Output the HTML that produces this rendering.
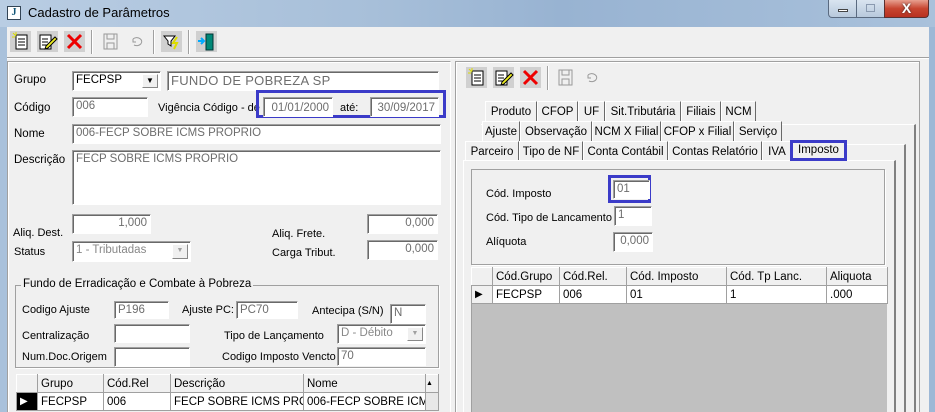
<!DOCTYPE html>
<html><head><meta charset="utf-8"><style>
*{box-sizing:border-box;margin:0;padding:0}
html{width:935px;height:412px;overflow:hidden}
body{width:935px;height:412px;overflow:hidden;background:#f0f0f0;font-family:"Liberation Sans",sans-serif;font-size:11px;color:#000;position:relative}
.a{position:absolute;white-space:nowrap}
.in{position:absolute;background:#fff;border:1px solid;border-color:#a0a0a0 #fff #fff #a0a0a0;box-shadow:inset 1px 1px 0 #696969;color:#6d6d6d;padding:1px 3px;line-height:15px;overflow:hidden;white-space:nowrap;font-size:11.5px}
.r{text-align:right}
.cb{position:absolute;right:2px;top:2px;width:16px;height:calc(100% - 4px);background:#f0f0f0;border:1px solid #fff;border-right-color:#888;border-bottom-color:#888;font-size:7px;text-align:center;line-height:12px;color:#a0a0a0}
.tab{position:absolute;height:20px;border:1px solid #fff;border-right:1px solid #696969;border-bottom:none;background:#f0f0f0;text-align:center;line-height:19px;padding-top:1px;overflow:hidden;white-space:nowrap;font-size:11.5px}
.blue{position:absolute;border:3px solid #3b3bc8}
.g{position:absolute;border:1px solid #a0a0a0;box-shadow:1px 1px 0 #fff}
table{border-collapse:collapse;position:absolute;font-size:11.5px}
td{border:1px solid #a0a0a0;height:18px;padding:0 3px;white-space:nowrap;overflow:hidden}
.hd td{background:#f0f0f0;border-color:#fff #a0a0a0 #a0a0a0 #fff}
.ico{position:absolute;width:21px;height:21px}
.ico.b{background:#d0d0d0}
</style></head><body>
<div class="a" style="left:0;top:0;width:935px;height:27px;background:linear-gradient(90deg,#b9cde3,#a7bfd9 40%,#98b3d2 60%,#a9c1db)"></div>
<div class="a" style="left:0;top:27px;width:7px;height:385px;background:#a9c1db"></div>
<div class="a" style="left:929px;top:27px;width:6px;height:385px;background:#9db8d6"></div>
<div class="a" style="left:7px;top:6px;width:14px;height:14px;background:#fff;border:1px solid #345;font:bold 10px 'Liberation Serif';color:#157;text-align:center;line-height:12px">J</div>
<div class="a" style="left:28px;top:5px;font-size:13px">Cadastro de Parâmetros</div>
<div class="a" style="left:828px;top:0;width:29px;height:18px;border:1px solid #5a6a80;border-top:none;border-radius:0 0 0 4px;background:linear-gradient(#d9e4f0,#b8c9dc)"><div class="a" style="left:9px;top:9px;width:10px;height:3px;background:#fff;border:1px solid #444"></div></div>
<div class="a" style="left:857px;top:0;width:27px;height:18px;border-bottom:1px solid #5a6a80;background:linear-gradient(#d9e4f0,#b8c9dc)"><div class="a" style="left:9px;top:4px;width:9px;height:8px;border:1px solid #8a9ab0"></div></div>
<div class="a" style="left:884px;top:0;width:45px;height:18px;border:1px solid #5a3030;border-top:none;border-radius:0 0 4px 0;background:linear-gradient(#e8a090,#c74530 50%,#b83020);color:#fff;font:bold 14px 'Liberation Sans';text-align:center;line-height:17px;text-shadow:0 0 2px #333">X</div>
<div class="ico b" style="left:10px;top:31px"><svg width="21" height="21"><rect x="6" y="4" width="11" height="14" fill="#fff" stroke="#000"/><path d="M8 8h7M8 11h7M8 14h7" stroke="#000"/><path d="M3 2l3 3M6 1v3M2 6h3" stroke="#dd0"/></svg></div>
<div class="ico b" style="left:37px;top:31px"><svg width="21" height="21"><rect x="3" y="4" width="11" height="14" fill="#fff" stroke="#000"/><path d="M5 8h6M5 11h6M5 14h6" stroke="#000"/><path d="M9 15l9-9 2 2-9 9-3 1z" fill="#ee2" stroke="#000"/></svg></div>
<div class="ico b" style="left:64px;top:31px"><svg width="21" height="21"><path d="M4 4l13 13M17 4L4 17" stroke="#e00" stroke-width="3"/></svg></div>
<div class="a" style="left:91px;top:30px;width:1px;height:24px;background:#a0a0a0;box-shadow:1px 0 #fff"></div>
<div class="ico" style="left:100px;top:31px"><svg width="21" height="21"><rect x="4" y="3" width="13" height="15" fill="none" stroke="#999"/><rect x="7" y="3" width="7" height="5" fill="none" stroke="#999"/><rect x="7" y="12" width="7" height="6" fill="none" stroke="#999"/></svg></div>
<div class="ico" style="left:127px;top:31px"><svg width="21" height="21"><path d="M6 8a5 4 0 1 1 1 6M6 8v3h3" fill="none" stroke="#999"/></svg></div>
<div class="a" style="left:153px;top:30px;width:1px;height:24px;background:#a0a0a0;box-shadow:1px 0 #fff"></div>
<div class="ico b" style="left:161px;top:31px"><svg width="21" height="21"><path d="M3 5h11l-4 5v5l-3-2v-3z" fill="#fff" stroke="#000"/><path d="M16 6l-4 6h4l-3 6" fill="none" stroke="#dd0" stroke-width="2"/></svg></div>
<div class="a" style="left:188px;top:30px;width:1px;height:24px;background:#a0a0a0;box-shadow:1px 0 #fff"></div>
<div class="ico b" style="left:196px;top:31px"><svg width="21" height="21"><rect x="10" y="3" width="7" height="16" fill="#087" stroke="#033"/><path d="M2 10h6M5 7l3 3-3 3" stroke="#0af" stroke-width="2" fill="none"/></svg></div>
<div class="a" style="left:7px;top:57px;width:922px;height:1px;background:#a0a0a0;box-shadow:0 1px #fff"></div>

<div class="a" style="left:7px;top:61px;width:444px;height:351px;border:1px solid #a0a0a0;border-right-color:#fff;border-bottom:none;box-shadow:inset 1px 1px #fff"></div>
<div class="a" style="left:14px;top:74px;font-size:11.5px">Grupo</div>
<div class="in" style="left:72px;top:71px;width:89px;height:20px;color:#000">FECPSP<div class="cb" style="color:#000;font-size:8px">▼</div></div>
<div class="in" style="left:167px;top:71px;width:272px;height:20px;font-size:13px;letter-spacing:.3px">FUNDO DE POBREZA SP</div>
<div class="a" style="left:14px;top:102px;font-size:11.5px">Código</div>
<div class="in" style="left:72px;top:97px;width:76px;height:20px">006</div>
<div class="a" style="left:158px;top:102px">Vigência Código - de</div>
<div class="blue" style="left:256px;top:90px;width:190px;height:28px"></div>
<div class="in r" style="left:263px;top:97px;width:70px;height:20px;padding-top:3px">01/01/2000</div>
<div class="a" style="left:340px;top:102px">até:</div>
<div class="in r" style="left:370px;top:97px;width:69px;height:20px;padding-top:3px">30/09/2017</div>
<div class="a" style="left:14px;top:128px;font-size:11.5px">Nome</div>
<div class="in" style="left:72px;top:124px;width:369px;height:20px">006-FECP SOBRE ICMS PROPRIO</div>
<div class="a" style="left:14px;top:154px;font-size:11.5px">Descrição</div>
<div class="in" style="left:72px;top:150px;width:369px;height:55px">FECP SOBRE ICMS PROPRIO</div>
<div class="in r" style="left:72px;top:214px;width:79px;height:20px">1,000</div>
<div class="a" style="left:13px;top:227px">Aliq. Dest.</div>
<div class="in r" style="left:367px;top:214px;width:71px;height:20px">0,000</div>
<div class="a" style="left:272px;top:228px">Aliq. Frete.</div>
<div class="a" style="left:14px;top:246px">Status</div>
<div class="in" style="left:72px;top:241px;width:119px;height:21px;color:#888">1 - Tributadas<div class="cb">▼</div></div>
<div class="a" style="left:272px;top:247px">Carga Tribut.</div>
<div class="in r" style="left:367px;top:240px;width:71px;height:20px">0,000</div>
<div class="g" style="left:15px;top:285px;width:424px;height:83px"></div>
<div class="a" style="left:21px;top:278px;background:#f0f0f0;padding:0 2px;font-size:11.5px">Fundo de Erradicação e Combate à Pobreza</div>
<div class="a" style="left:22px;top:304px">Codigo Ajuste</div>
<div class="in" style="left:114px;top:301px;width:55px;height:18px">P196</div>
<div class="a" style="left:182px;top:304px">Ajuste PC:</div>
<div class="in" style="left:236px;top:301px;width:62px;height:18px">PC70</div>
<div class="a" style="left:312px;top:305px">Antecipa (S/N)</div>
<div class="in" style="left:390px;top:304px;width:36px;height:20px">N</div>
<div class="a" style="left:22px;top:330px">Centralização</div>
<div class="in" style="left:114px;top:324px;width:76px;height:19px"></div>
<div class="a" style="left:224px;top:330px">Tipo de Lançamento</div>
<div class="in" style="left:337px;top:324px;width:89px;height:20px;color:#888">D - Débito<div class="cb">▼</div></div>
<div class="a" style="left:22px;top:351px">Num.Doc.Origem</div>
<div class="in" style="left:114px;top:347px;width:76px;height:20px"></div>
<div class="a" style="left:222px;top:351px">Codigo Imposto Vencto</div>
<div class="in" style="left:337px;top:347px;width:89px;height:19px">70</div>
<table style="left:16px;top:374px;width:422px;table-layout:fixed">
<colgroup><col style="width:21px"><col style="width:66px"><col style="width:67px"><col style="width:133px"><col style="width:122px"><col style="width:13px"></colgroup>
<tr class="hd"><td></td><td>Grupo</td><td>Cód.Rel</td><td>Descrição</td><td>Nome</td><td style="font-size:7px;padding:0">▲</td></tr>
<tr style="background:#fff"><td style="background:#000;color:#fff;font-size:10px">▶</td><td>FECPSP</td><td>006</td><td>FECP SOBRE ICMS PROPR</td><td>006-FECP SOBRE ICMS I</td><td style="background:#e8e8e8"></td></tr>
</table>

<div class="a" style="left:455px;top:61px;width:465px;height:351px;border:1px solid #a0a0a0;border-bottom:none;box-shadow:inset 1px 1px #fff"></div>
<div class="ico b" style="left:466px;top:67px"><svg width="21" height="21"><rect x="6" y="4" width="11" height="14" fill="#fff" stroke="#000"/><path d="M8 8h7M8 11h7M8 14h7" stroke="#000"/><path d="M3 2l3 3M6 1v3M2 6h3" stroke="#dd0"/></svg></div>
<div class="ico b" style="left:493px;top:67px"><svg width="21" height="21"><rect x="3" y="4" width="11" height="14" fill="#fff" stroke="#000"/><path d="M5 8h6M5 11h6M5 14h6" stroke="#000"/><path d="M9 15l9-9 2 2-9 9-3 1z" fill="#ee2" stroke="#000"/></svg></div>
<div class="ico b" style="left:520px;top:67px"><svg width="21" height="21"><path d="M4 4l13 13M17 4L4 17" stroke="#e00" stroke-width="3"/></svg></div>
<div class="a" style="left:547px;top:66px;width:1px;height:24px;background:#a0a0a0;box-shadow:1px 0 #fff"></div>
<div class="ico" style="left:555px;top:67px"><svg width="21" height="21"><rect x="4" y="3" width="13" height="15" fill="none" stroke="#999"/><rect x="7" y="3" width="7" height="5" fill="none" stroke="#999"/><rect x="7" y="12" width="7" height="6" fill="none" stroke="#999"/></svg></div>
<div class="ico" style="left:582px;top:67px"><svg width="21" height="21"><path d="M6 8a5 4 0 1 1 1 6M6 8v3h3" fill="none" stroke="#999"/></svg></div>
<div class="a" style="left:481px;top:124px;width:435px;height:288px;border-top:1px solid #fff;border-right:2px solid #808080"></div>
<div class="a" style="left:470px;top:144px;width:436px;height:268px;border-top:1px solid #fff;border-right:2px solid #808080"></div>
<div class="a" style="left:463px;top:160px;width:433px;height:252px;border-top:1px solid #fff;border-left:1px solid #fff;border-right:2px solid #808080"></div>
<div class="tab" style="left:485px;top:101px;width:52px">Produto</div>
<div class="tab" style="left:537px;top:101px;width:41px">CFOP</div>
<div class="tab" style="left:578px;top:101px;width:27px">UF</div>
<div class="tab" style="left:605px;top:101px;width:76px">Sit.Tributária</div>
<div class="tab" style="left:681px;top:101px;width:40px">Filiais</div>
<div class="tab" style="left:721px;top:101px;width:35px">NCM</div>
<div class="tab" style="left:482px;top:121px;width:38px">Ajuste</div>
<div class="tab" style="left:520px;top:121px;width:72px">Observação</div>
<div class="tab" style="left:592px;top:121px;width:69px">NCM X Filial</div>
<div class="tab" style="left:661px;top:121px;width:73px">CFOP x Filial</div>
<div class="tab" style="left:734px;top:121px;width:48px">Serviço</div>
<div class="tab" style="left:465px;top:141px;width:54px;height:19px">Parceiro</div>
<div class="tab" style="left:519px;top:141px;width:64px;height:19px">Tipo de NF</div>
<div class="tab" style="left:583px;top:141px;width:85px;height:19px">Conta Contábil</div>
<div class="tab" style="left:668px;top:141px;width:94px;height:19px">Contas Relatório</div>
<div class="tab" style="left:762px;top:141px;width:30px;height:19px">IVA</div>
<div class="a" style="left:790px;top:140px;width:57px;height:21px;border:3px solid #3b3bc8;text-align:center;line-height:15px;background:#f0f0f0;font-size:11.5px">Imposto</div>
<div class="g" style="left:471px;top:169px;width:414px;height:96px"></div>
<div class="a" style="left:486px;top:188px">Cód. Imposto</div>
<div class="blue" style="left:608px;top:175px;width:43px;height:28px"></div>
<div class="in" style="left:613px;top:180px;width:37px;height:19px">01</div>
<div class="a" style="left:486px;top:212px">Cód. Tipo de Lancamento</div>
<div class="in" style="left:614px;top:206px;width:38px;height:20px">1</div>
<div class="a" style="left:486px;top:236px">Alíquota</div>
<div class="in r" style="left:613px;top:232px;width:40px;height:20px">0,000</div>
<div class="a" style="left:471px;top:267px;width:416px;height:145px;background:#c0c0c0;border-left:1px solid #a0a0a0"></div>
<table style="left:471px;top:267px;width:416px;table-layout:fixed">
<colgroup><col style="width:21px"><col style="width:67px"><col style="width:67px"><col style="width:100px"><col style="width:100px"><col style="width:61px"></colgroup>
<tr class="hd"><td></td><td>Cód.Grupo</td><td>Cód.Rel.</td><td>Cód. Imposto</td><td>Cód. Tp Lanc.</td><td>Aliquota</td></tr>
<tr style="background:#fff;height:17px"><td style="background:#f0f0f0;font-size:10px">▶</td><td>FECPSP</td><td>006</td><td>01</td><td>1</td><td>.000</td></tr>
</table>
</body></html>
